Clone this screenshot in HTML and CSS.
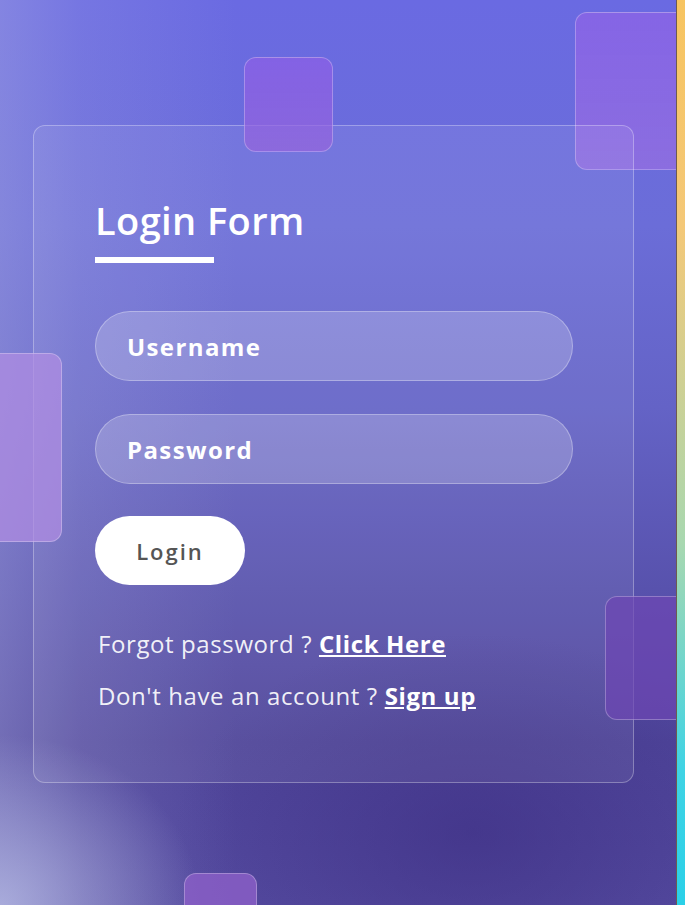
FILE: index.html
```html
<!DOCTYPE html>
<html>
<head>
<meta charset="utf-8">
<link rel="stylesheet" href="styles.css">
</head>
<body>
<div class="page">
  <div class="scene">
    <div class="sq sq-top"></div>
    <div class="sq sq-tr"></div>
    <div class="sq sq-left"></div>
    <div class="sq sq-right"></div>
    <div class="sq sq-bottom"></div>
    <form class="card">
      <h1 class="title">Login Form</h1>
      <div class="bar"></div>
      <div class="field">Username</div>
      <div class="field">Password</div>
      <div class="btn">Login</div>
      <p class="line">Forgot password ? <a class="link">Click Here</a></p>
      <p class="line">Don't have an account ? <a class="link">Sign up</a></p>
    </form>
  </div>
  <div class="strip"></div>
</div>
</body>
</html>
```
FILE: styles.css
```css
* { box-sizing: border-box; }
html, body { margin: 0; padding: 0; }
body {
  width: 685px;
  height: 905px;
  overflow: hidden;
  font-family: "Open Sans", "Noto Sans", sans-serif;
}
.page {
  display: flex;
  width: 685px;
  height: 905px;
}
.scene {
  position: relative;
  flex: 1;
  overflow: hidden;
  background:
    radial-gradient(ellipse 200px 170px at 0% 100%, rgba(185,190,230,0.75), rgba(185,190,230,0) 100%),
    linear-gradient(90deg, rgba(170,172,225,0.4) 0%, rgba(170,172,225,0.18) 12%, rgba(170,172,225,0) 35%),
    radial-gradient(ellipse 300px 200px at 70% 92%, rgba(60,45,130,0.6), rgba(60,45,130,0) 100%),
    linear-gradient(180deg, #6a6ae2 0%, #6b6dd8 25%, #6463c6 45%, #5852ad 65%, #4e4499 82%, #544a9f 100%);
}
.strip {
  width: 9px;
  border-left: 1px solid #6f5a50;
  background: linear-gradient(180deg, #f7c460 0%, #f4c878 25%, #a8d8b0 60%, #3fd3e4 85%, #2ad0e8 100%);
}
.sq {
  position: absolute;
  border-radius: 12px;
  border: 1px solid rgba(255,255,255,0.28);
  background: linear-gradient(180deg, rgba(140,95,230,0.75), rgba(150,100,220,0.7));
}
.sq-top { left: 244px; top: 57px; width: 89px; height: 95px; z-index: 2; }
.sq-tr { left: 575px; top: 12px; width: 120px; height: 158px; background: linear-gradient(180deg, rgba(140,100,230,0.8), rgba(150,110,225,0.75)); }
.sq-left { left: -20px; top: 353px; width: 82px; height: 189px; background: rgba(175,140,225,0.75); z-index: 2; }
.sq-right { left: 605px; top: 596px; width: 100px; height: 124px; background: rgba(110,70,180,0.7); z-index: 2; }
.sq-bottom { left: 184px; top: 873px; width: 73px; height: 60px; background: rgba(140,95,200,0.8); }
.card {
  position: relative;
  z-index: 1;
  margin: 125px 0 0 33px;
  width: 601px;
  height: 658px;
  border-radius: 12px;
  border: 1px solid rgba(255,255,255,0.3);
  background: rgba(255,255,255,0.07);
  padding: 69px 61px 0 61px;
  display: flex;
  flex-direction: column;
  align-items: flex-start;
}
.title {
  margin: 0;
  font-size: 38px;
  font-weight: 600;
  line-height: 50px;
  color: #fff;
  letter-spacing: 0.4px;
}
.bar {
  width: 119px;
  height: 6px;
  background: #fff;
  margin-top: 12px;
  margin-bottom: 48px;
}
.field {
  width: 478px;
  height: 70px;
  border-radius: 35px;
  border: 1px solid rgba(255,255,255,0.3);
  background: rgba(255,255,255,0.2);
  color: #fff;
  font-size: 24px;
  font-weight: 700;
  letter-spacing: 1.4px;
  padding-left: 31px;
  display: flex;
  align-items: center;
  margin-bottom: 33px;
}
.btn {
  width: 150px;
  height: 69px;
  border-radius: 35px;
  background: #fff;
  color: #555;
  font-size: 22px;
  font-weight: 600;
  letter-spacing: 2px;
  display: flex;
  align-items: center;
  justify-content: center;
  margin-top: -1px;
  margin-bottom: 42px;
}
.line {
  margin: 0 0 18px 3px;
  font-size: 24px;
  line-height: 34px;
  color: rgba(255,255,255,0.92);
  letter-spacing: 0.6px;
}
.link {
  font-weight: 700;
  text-decoration: underline;
  color: #fff;
}
```
